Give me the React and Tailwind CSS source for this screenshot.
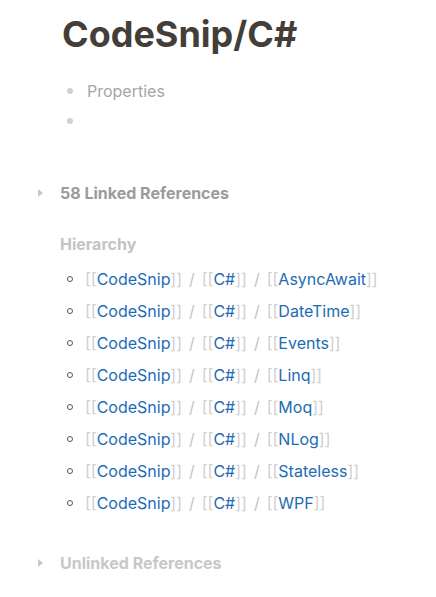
import React from 'react';

const pages = ['AsyncAwait', 'DateTime', 'Events', 'Linq', 'Moq', 'NLog', 'Stateless', 'WPF'];

function Ref({ name }) {
  return (
    <span>
      <span className="text-[#cfcfcf]">[[</span>
      <span className="text-[#1d6cb3]">{name}</span>
      <span className="text-[#cfcfcf]">]]</span>
    </span>
  );
}

function Caret() {
  return (
    <svg width="8" height="10" viewBox="0 0 8 10" className="shrink-0">
      <path d="M1 1 L6 5 L1 9 Z" fill="#c8c8c8" />
    </svg>
  );
}

export default function App() {
  return (
    <div className="min-h-[597px] w-[436px] bg-white font-['Inter','Liberation_Sans',sans-serif]">
      <div className="pt-[10px] pl-[62px]">
        <h1 className="text-[36px] font-bold leading-[48px] text-[#433f38]">CodeSnip/C#</h1>
      </div>

      <div className="mt-[18px] pl-[67px] text-[16px] text-[#a5a5a5]">
        <div className="flex h-[30px] items-center">
          <span className="h-[6px] w-[6px] rounded-full bg-[#d0d0d0]" />
          <span className="ml-[14px]">Properties</span>
        </div>
        <div className="flex h-[30px] items-center">
          <span className="h-[6px] w-[6px] rounded-full bg-[#d0d0d0]" />
        </div>
      </div>

      <div className="mt-[45px] flex items-center pl-[37px]">
        <Caret />
        <span className="ml-[15px] text-[16px] font-bold text-[#9b9b9b]">58 Linked References</span>
      </div>

      <div className="mt-[27px] pl-[60px] text-[16px] font-bold text-[#c4c4c4]">Hierarchy</div>

      <ul className="mt-[7px] pl-[67px] text-[16px]">
        {pages.map((p) => (
          <li key={p} className="flex h-[32px] items-center">
            <span className="h-[6px] w-[6px] rounded-full border border-[#555]" />
            <span className="ml-[12px] flex items-center">
              <Ref name="CodeSnip" />
              <span className="mx-[7px] text-[#c4c4c4]">/</span>
              <Ref name="C#" />
              <span className="mx-[7px] text-[#c4c4c4]">/</span>
              <Ref name={p} />
            </span>
          </li>
        ))}
      </ul>

      <div className="mt-[32px] flex items-center pl-[37px]">
        <Caret />
        <span className="ml-[15px] text-[16px] font-bold text-[#c8c8c8]">Unlinked References</span>
      </div>
    </div>
  );
}
